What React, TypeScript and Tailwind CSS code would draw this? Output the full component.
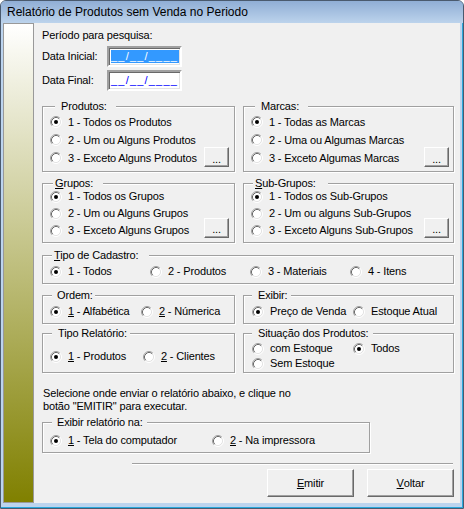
import type { ReactNode } from 'react';

function Radio({ checked }: { checked?: boolean }) {
  return (
    <svg width="12" height="12" viewBox="0 0 12 12" className="shrink-0">
      <circle cx="6" cy="6" r="4.5" fill="#fff" />
      <path d="M2.11 9.89A5.5 5.5 0 0 1 9.89 2.11" fill="none" stroke="#a0a0a0" />
      <path d="M9.89 2.11A5.5 5.5 0 0 1 2.11 9.89" fill="none" stroke="#fff" />
      <path d="M2.82 9.18A4.5 4.5 0 0 1 9.18 2.82" fill="none" stroke="#696969" />
      <path d="M9.18 2.82A4.5 4.5 0 0 1 2.82 9.18" fill="none" stroke="#e3e3e3" />
      {checked && <circle cx="6" cy="6" r="2" fill="#000" />}
    </svg>
  );
}

function Option({ checked, children, className = '' }: { checked?: boolean; children: ReactNode; className?: string }) {
  return (
    <div className={`flex items-center gap-[6px] shrink-0 ${className}`}>
      <Radio checked={checked} />
      <span className="whitespace-nowrap">{children}</span>
    </div>
  );
}

function Group({ label, labelClass, className, children }: { label: ReactNode; labelClass: string; className: string; children: ReactNode }) {
  return (
    <div className={`relative border border-[#a0a0a0] shadow-[inset_1px_1px_0_#fff,1px_1px_0_#fff] ${className}`}>
      <span className={`absolute -top-[7px] bg-[#f0f0f0] leading-[13px] whitespace-nowrap ${labelClass}`}>{label}</span>
      {children}
    </div>
  );
}

function DotsButton({ className }: { className: string }) {
  return (
    <div className={`w-[25px] h-[20px] shrink-0 flex items-center justify-center bg-[#f0f0f0] border border-t-white border-l-white border-r-[#696969] border-b-[#696969] shadow-[inset_-1px_-1px_0_#a0a0a0] leading-none ${className}`}>
      <span className="mt-[4px]">...</span>
    </div>
  );
}

function PushButton({ children }: { children: ReactNode }) {
  return (
    <div className="w-[87px] h-[28px] flex items-center justify-center bg-[#f0f0f0] border border-t-white border-l-white border-r-[#696969] border-b-[#696969] shadow-[inset_-1px_-1px_0_#a0a0a0]">
      {children}
    </div>
  );
}

function DateInput({ selected }: { selected?: boolean }) {
  return (
    <div className="w-[75px] h-[21px] bg-white border-2 border-t-[#a0a0a0] border-l-[#a0a0a0] border-r-white border-b-white shadow-[inset_1px_1px_0_#696969,inset_-1px_-1px_0_#e3e3e3] pl-[2px] flex items-center">
      <span className={`inline-block w-[68px] h-[13px] leading-[12px] tracking-[1.2px] ${selected ? 'bg-[#3399ff] text-white' : 'text-[#0000ff]'}`}>__/__/____</span>
    </div>
  );
}

const U = ({ children }: { children: ReactNode }) => <span className="underline underline-offset-[1px]">{children}</span>;

export default function App() {
  return (
    <div className="w-[464px] h-[509px] bg-[#bcd4ee] border border-[#4a5a6e] rounded-t-[6px] flex flex-col overflow-hidden shadow-[inset_-1px_-1px_0_#2aa8dc] font-['Liberation_Sans',Arial,sans-serif] text-[11px] tracking-[-0.15px] text-black">
      <div className="h-[22px] shrink-0 bg-[linear-gradient(#90aed5,#bcd3ec)] pl-[6px] flex items-center text-[12px] tracking-normal">
        Relatório de Produtos sem Venda no Periodo
      </div>

      <div className="flex-1 ml-[2px] mr-[3px] mb-[5px] flex bg-[#f0f0f0]">
        <div className="w-[31px] shrink-0 border border-[#999] bg-[linear-gradient(#ffffff,#808000)]" />

        <div className="flex-1 pl-[8px] pt-[6px] flex flex-col">
          <div className="h-[13px] leading-[13px]">Período para pesquisa:</div>
          <div className="mt-[4px] flex items-center h-[21px]">
            <span className="w-[65px]">Data Inicial:</span>
            <DateInput selected />
          </div>
          <div className="mt-[3px] flex items-center h-[21px]">
            <span className="w-[65px]">Data Final:</span>
            <DateInput />
          </div>

          <div className="mt-[15px] grid grid-cols-[193px_211px] gap-x-[8px]">
            <Group label="Produtos:" labelClass="left-[12px] pl-[6px] pr-[9px]" className="h-[66px] pt-[6px] pl-[7px] pr-[5px]">
              <Option checked className="h-[18px]">1 - Todos os Produtos</Option>
              <Option className="h-[18px]">2 - Um ou Alguns Produtos</Option>
              <div className="h-[18px] flex items-center justify-between">
                <Option>3 - Exceto Alguns Produtos</Option>
                <DotsButton className="mb-[2px]" />
              </div>
            </Group>
            <Group label="Marcas:" labelClass="left-[11px] pl-[6px] pr-[9px]" className="h-[66px] pt-[6px] pl-[7px] pr-[4px]">
              <Option checked className="h-[18px]">1 - Todas as Marcas</Option>
              <Option className="h-[18px]">2 - Uma ou Algumas Marcas</Option>
              <div className="h-[18px] flex items-center justify-between">
                <Option>3 - Exceto Algumas Marcas</Option>
                <DotsButton className="mb-[2px]" />
              </div>
            </Group>
          </div>

          <div className="mt-[11px] grid grid-cols-[193px_211px] gap-x-[8px]">
            <Group label={<><U>G</U>rupos:</>} labelClass="left-[10px] pl-[2px] pr-[10px]" className="h-[60px] pt-[4px] pl-[7px] pr-[5px]">
              <Option checked className="h-[17px]">1 - Todos os Grupos</Option>
              <Option className="h-[17px]">2 - Um ou Alguns Grupos</Option>
              <div className="h-[17px] flex items-center justify-between">
                <Option>3 - Exceto Alguns Grupos</Option>
                <DotsButton className="mb-[6px]" />
              </div>
            </Group>
            <Group label={<><U>S</U>ub-Grupos:</>} labelClass="left-[9px] pl-[2px] pr-[12px]" className="h-[60px] pt-[4px] pl-[7px] pr-[4px]">
              <Option checked className="h-[17px]">1 - Todos os Sub-Grupos</Option>
              <Option className="h-[17px]">2 - Um ou alguns Sub-Grupos</Option>
              <div className="h-[17px] flex items-center justify-between">
                <Option>3 - Exceto Alguns Sub-Grupos</Option>
                <DotsButton className="mb-[6px]" />
              </div>
            </Group>
          </div>

          <Group label={<><U>T</U>ipo de Cadastro:</>} labelClass="left-[9px] pl-[2px] pr-[10px]" className="mt-[12px] w-[412px] h-[29px] pt-[7px] pl-[7px] flex">
            <Option checked className="h-[17px] w-[100px]">1 - Todos</Option>
            <Option className="h-[17px] w-[100px]">2 - Produtos</Option>
            <Option className="h-[17px] w-[100px]">3 - Materiais</Option>
            <Option className="h-[17px]">4 - Itens</Option>
          </Group>

          <div className="mt-[11px] grid grid-cols-[193px_211px] gap-x-[8px]">
            <Group label="Ordem:" labelClass="left-[9px] pl-[5px] pr-[2px]" className="h-[29px] pt-[7px] pl-[7px] flex">
              <Option checked className="h-[17px] w-[91px]"><U>1</U> - Alfabética</Option>
              <Option className="h-[17px]"><U>2</U> - Númerica</Option>
            </Group>
            <Group label="Exibir:" labelClass="left-[8px] pl-[6px] pr-[3px]" className="h-[29px] pt-[7px] pl-[8px] flex">
              <Option checked className="h-[17px] w-[101px]">Preço de Venda</Option>
              <Option className="h-[17px]">Estoque Atual</Option>
            </Group>
          </div>

          <div className="mt-[9px] grid grid-cols-[193px_211px] gap-x-[8px]">
            <Group label="Tipo Relatório:" labelClass="left-[9px] pl-[6px] pr-[3px]" className="h-[40px] pt-[14px] pl-[7px] flex items-start">
              <Option checked className="h-[17px] w-[93px]"><U>1</U> - Produtos</Option>
              <Option className="h-[17px]"><U>2</U> - Clientes</Option>
            </Group>
            <Group label="Situação dos Produtos:" labelClass="left-[8px] pl-[6px] pr-[5px]" className="h-[40px] pt-[7px] pl-[8px]">
              <div className="flex">
                <Option className="h-[15px] w-[101px]">com Estoque</Option>
                <Option checked className="h-[15px]">Todos</Option>
              </div>
              <Option className="h-[15px]">Sem Estoque</Option>
            </Group>
          </div>

          <div className="mt-[14px] ml-[1px] leading-[13px]">
            <div>Selecione onde enviar o relatório abaixo, e clique no</div>
            <div>botão "EMITIR" para executar.</div>
          </div>

          <Group label="Exibir relatório na:" labelClass="left-[9px] pl-[5px] pr-[4px]" className="mt-[9px] w-[328px] h-[31px] pt-[9px] pl-[7px] flex">
            <Option checked className="h-[17px] w-[162px]"><U>1</U> - Tela do computador</Option>
            <Option className="h-[17px]"><U>2</U> - Na impressora</Option>
          </Group>

          <div className="mt-[10px] ml-[90px] w-[321px] h-[2px] border-t border-t-[#a0a0a0] border-b border-b-white" />

          <div className="mt-[4px] w-[412px] flex justify-end gap-[13px]">
            <PushButton><U>E</U>mitir</PushButton>
            <PushButton><U>V</U>oltar</PushButton>
          </div>
        </div>
      </div>
    </div>
  );
}
